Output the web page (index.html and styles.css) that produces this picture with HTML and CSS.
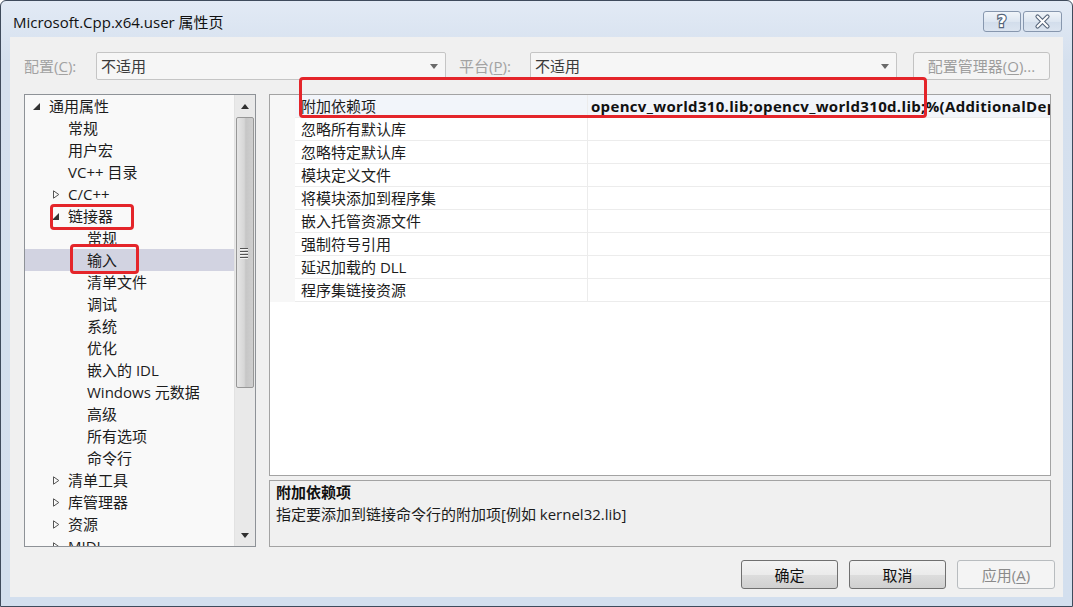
FILE: index.html
```html
<!DOCTYPE html>
<html lang="zh-CN">
<head>
<meta charset="utf-8">
<title>Microsoft.Cpp.x64.user 属性页</title>
<link rel="stylesheet" href="styles.css">
</head>
<body>
<div class="window">
  <div class="titlebar">
    <div class="title">Microsoft.Cpp.x64.user 属性页</div>
    <div class="tb-buttons">
      <div class="tb-btn help">
        <svg width="38" height="21" viewBox="0 0 38 21"><text x="19" y="16" text-anchor="middle" class="q">?</text></svg>
      </div>
      <div class="tb-btn close">
        <svg width="39" height="21" viewBox="0 0 39 21">
          <path d="M14.5 5.5 L24.5 15.5 M24.5 5.5 L14.5 15.5" stroke="#56657a" stroke-width="4.2" stroke-linecap="round"/>
          <path d="M14.5 5.5 L24.5 15.5 M24.5 5.5 L14.5 15.5" stroke="#ffffff" stroke-width="2" stroke-linecap="round"/>
        </svg>
      </div>
    </div>
  </div>

  <div class="client">
    <div class="config-row">
      <span class="label lbl-config">配置(<u>C</u>):</span>
      <div class="combo combo-config">
        <span>不适用</span>
        <svg class="arrow" width="8" height="5" viewBox="0 0 8 5"><path d="M0 0 H8 L4 5 Z" fill="#6a6a6a"/></svg>
      </div>
      <span class="label lbl-platform">平台(<u>P</u>):</span>
      <div class="combo combo-platform">
        <span>不适用</span>
        <svg class="arrow" width="8" height="5" viewBox="0 0 8 5"><path d="M0 0 H8 L4 5 Z" fill="#6a6a6a"/></svg>
      </div>
      <div class="btn-cfgmgr">配置管理器(<u>O</u>)...</div>
    </div>

    <div class="main">
      <div class="tree">
        <div class="tree-list">
          <div class="node l0"><span class="exp"><svg width="7" height="7" viewBox="0 0 7 7"><path d="M7 0 V7 H0 Z" fill="#333"/></svg></span>通用属性</div>
          <div class="node l1"><span class="exp"></span>常规</div>
          <div class="node l1"><span class="exp"></span>用户宏</div>
          <div class="node l1"><span class="exp"></span>VC++ 目录</div>
          <div class="node l1"><span class="exp"><svg width="8" height="9" viewBox="0 0 8 9"><path d="M1.5 0.8 L6.8 4.5 L1.5 8.2 Z" fill="none" stroke="#555" stroke-width="1"/></svg></span>C/C++</div>
          <div class="node l1"><span class="exp"><svg width="7" height="7" viewBox="0 0 7 7"><path d="M7 0 V7 H0 Z" fill="#333"/></svg></span>链接器</div>
          <div class="node l2"><span class="exp"></span>常规</div>
          <div class="node l2 selected"><span class="exp"></span>输入</div>
          <div class="node l2"><span class="exp"></span>清单文件</div>
          <div class="node l2"><span class="exp"></span>调试</div>
          <div class="node l2"><span class="exp"></span>系统</div>
          <div class="node l2"><span class="exp"></span>优化</div>
          <div class="node l2"><span class="exp"></span>嵌入的 IDL</div>
          <div class="node l2"><span class="exp"></span>Windows 元数据</div>
          <div class="node l2"><span class="exp"></span>高级</div>
          <div class="node l2"><span class="exp"></span>所有选项</div>
          <div class="node l2"><span class="exp"></span>命令行</div>
          <div class="node l1"><span class="exp"><svg width="8" height="9" viewBox="0 0 8 9"><path d="M1.5 0.8 L6.8 4.5 L1.5 8.2 Z" fill="none" stroke="#555" stroke-width="1"/></svg></span>清单工具</div>
          <div class="node l1"><span class="exp"><svg width="8" height="9" viewBox="0 0 8 9"><path d="M1.5 0.8 L6.8 4.5 L1.5 8.2 Z" fill="none" stroke="#555" stroke-width="1"/></svg></span>库管理器</div>
          <div class="node l1"><span class="exp"><svg width="8" height="9" viewBox="0 0 8 9"><path d="M1.5 0.8 L6.8 4.5 L1.5 8.2 Z" fill="none" stroke="#555" stroke-width="1"/></svg></span>资源</div>
          <div class="node l1 last"><span class="exp"><svg width="8" height="9" viewBox="0 0 8 9"><path d="M1.5 0.8 L6.8 4.5 L1.5 8.2 Z" fill="none" stroke="#555" stroke-width="1"/></svg></span>MIDL</div>
        </div>
        <div class="vscroll">
          <div class="sb-arrow"><svg width="8" height="5" viewBox="0 0 8 5"><path d="M0 5 H8 L4 0 Z" fill="#303030"/></svg></div>
          <div class="sb-track">
            <div class="sb-thumb">
              <div class="grip"><i></i><i></i><i></i><i></i></div>
            </div>
          </div>
          <div class="sb-arrow"><svg width="8" height="5" viewBox="0 0 8 5"><path d="M0 0 H8 L4 5 Z" fill="#303030"/></svg></div>
        </div>
      </div>

      <div class="right">
        <div class="grid">
          <div class="prow current"><div class="gutter"></div><div class="pname">附加依赖项</div><div class="pval">opencv_world310.lib;opencv_world310d.lib;%(AdditionalDependencies)</div></div>
          <div class="prow"><div class="gutter"></div><div class="pname">忽略所有默认库</div><div class="pval"></div></div>
          <div class="prow"><div class="gutter"></div><div class="pname">忽略特定默认库</div><div class="pval"></div></div>
          <div class="prow"><div class="gutter"></div><div class="pname">模块定义文件</div><div class="pval"></div></div>
          <div class="prow"><div class="gutter"></div><div class="pname">将模块添加到程序集</div><div class="pval"></div></div>
          <div class="prow"><div class="gutter"></div><div class="pname">嵌入托管资源文件</div><div class="pval"></div></div>
          <div class="prow"><div class="gutter"></div><div class="pname">强制符号引用</div><div class="pval"></div></div>
          <div class="prow"><div class="gutter"></div><div class="pname">延迟加载的 DLL</div><div class="pval"></div></div>
          <div class="prow"><div class="gutter"></div><div class="pname">程序集链接资源</div><div class="pval"></div></div>
        </div>
        <div class="desc">
          <div class="desc-title">附加依赖项</div>
          <div class="desc-text">指定要添加到链接命令行的附加项[例如 kernel32.lib]</div>
        </div>
      </div>
    </div>

    <div class="buttons">
      <div class="btn">确定</div>
      <div class="btn">取消</div>
      <div class="btn disabled">应用(<u>A</u>)</div>
    </div>
  </div>

  <div class="mark mark-linker"></div>
  <div class="mark mark-input"></div>
  <div class="mark mark-deps"></div>
</div>
</body>
</html>
```

FILE: styles.css
```css
* { box-sizing: border-box; }
html, body { margin: 0; padding: 0; background: #ffffff; }
body {
  font-family: "Open Sans", "Noto Sans CJK SC", sans-serif;
  font-size: 15px;
  color: #1a1a1a;
}
u { text-decoration: underline; text-underline-offset: 2px; }

.window {
  position: relative;
  width: 1073px;
  height: 607px;
  border: 1px solid #3f4b5c;
  border-radius: 6px 6px 0 0;
  background: linear-gradient(#e2eaf5, #d5e0ee 60px, #d3dfee);
  padding: 0 9px 9px 9px;
  display: flex;
  flex-direction: column;
  overflow: hidden;
}

/* title bar */
.titlebar {
  height: 36px;
  display: flex;
  justify-content: space-between;
  align-items: flex-start;
  flex: none;
}
.title {
  margin-top: 12px;
  padding-left: 3px;
  font-size: 15px;
  line-height: 19px;
  color: #111;
}
.tb-buttons {
  display: flex;
  gap: 2px;
  margin-top: 10px;
  margin-right: 1px;
}
.tb-btn {
  height: 21px;
  border: 1px solid #8797ae;
  border-radius: 3px;
  background: linear-gradient(#f0f4f9, #dde6f1 50%, #d2ddeb 51%, #dbe4f0);
  display: flex;
  align-items: center;
  justify-content: center;
  overflow: hidden;
}
.tb-btn svg { display: block; margin: -1px; }
.help { width: 38px; }
.close { width: 39px; }
.q {
  font-family: "DejaVu Sans", sans-serif;
  font-weight: bold;
  font-size: 16px;
  fill: #ffffff;
  stroke: #56657a;
  stroke-width: 2.4px;
  paint-order: stroke;
}

/* client area */
.client {
  flex: 1;
  background: #f0f0f0;
  padding: 15px 8px 8px 14px;
  display: flex;
  flex-direction: column;
}

.config-row {
  height: 28px;
  display: flex;
  align-items: center;
  margin-right: 5px;
  flex: none;
}
.label {
  color: #a2a2a2;
  line-height: 20px;
  flex: none;
}
.lbl-config { width: 72px; }
.lbl-platform { width: 71px; margin-left: 13px; }
.combo {
  height: 28px;
  border: 1px solid #c5c5c5;
  border-radius: 2px;
  background: #f6f6f6;
  display: flex;
  align-items: center;
  justify-content: space-between;
  padding: 0 7px 0 4px;
  color: #3a3a3a;
  line-height: 20px;
  flex: none;
}
.combo-config { width: 350px; }
.combo-platform { width: 367px; }
.arrow { display: block; margin-top: 1px; }
.btn-cfgmgr {
  margin-left: auto;
  width: 137px;
  height: 28px;
  border: 1px solid #c2c2c2;
  border-radius: 3px;
  background: #f4f4f4;
  color: #9d9d9d;
  display: flex;
  align-items: center;
  justify-content: center;
  line-height: 20px;
  flex: none;
}

/* main area */
.main {
  margin-top: 14px;
  height: 453px;
  display: flex;
  gap: 13px;
  margin-right: 4px;
  flex: none;
}

.tree {
  width: 232px;
  height: 453px;
  flex: none;
  border: 1px solid #8e9297;
  background: #f9f9f9;
  display: flex;
  overflow: hidden;
}
.tree-list {
  flex: 1;
  min-width: 0;
  overflow: hidden;
}
.node {
  height: 22px;
  line-height: 22px;
  display: flex;
  align-items: center;
  white-space: nowrap;
  color: #1c1c1c;
}
.node.l0 { padding-left: 8px; }
.node.l1 { padding-left: 27px; }
.node.l2 { padding-left: 46px; }
.node.selected { background: #d2d3e1; }
.node.last { align-items: flex-start; line-height: 22px; }
.exp {
  width: 16px;
  height: 22px;
  display: flex;
  align-items: center;
  flex: none;
}
.exp svg { display: block; margin-top: 1px; }

.vscroll {
  width: 21px;
  flex: none;
  display: flex;
  flex-direction: column;
  background: #e9e9e9;
  border-left: 1px solid #e2e2e2;
}
.sb-arrow {
  height: 22px;
  flex: none;
  display: flex;
  align-items: center;
  justify-content: center;
}
.sb-arrow svg { display: block; }
.sb-track {
  flex: 1;
  display: flex;
  flex-direction: column;
  padding: 0 1px;
}
.sb-thumb {
  height: 271px;
  border: 1px solid #979797;
  border-radius: 2px;
  background: linear-gradient(90deg, #e6e6e6, #d6d6d6 45%, #c6c6c6 55%, #cfcfcf);
  display: flex;
  align-items: center;
  justify-content: center;
}
.grip {
  display: flex;
  flex-direction: column;
  gap: 2px;
  margin-right: 2px;
}
.grip i {
  display: block;
  width: 8px;
  height: 1px;
  background: #555;
  box-shadow: 0 1px 0 #f4f4f4;
}

.right {
  flex: 1;
  min-width: 0;
  display: flex;
  flex-direction: column;
  gap: 4px;
}
.grid {
  height: 382px;
  border: 1px solid #a3a3a3;
  background: #ffffff;
  overflow: hidden;
}
.prow {
  height: 23px;
  display: flex;
  white-space: nowrap;
}
.gutter {
  width: 25px;
  flex: none;
  background: #f7f7f7;
}
.pname {
  width: 293px;
  flex: none;
  padding-left: 6px;
  line-height: 22px;
  border-bottom: 1px solid #ececec;
  border-right: 1px solid #ececec;
  color: #1c1c1c;
}
.pval {
  flex: 1;
  overflow: hidden;
  padding-left: 3px;
  line-height: 22px;
  border-bottom: 1px solid #ececec;
  font-weight: bold;
  letter-spacing: 0.33px;
  color: #111;
  min-width: 0;
}
.prow.current .pname,
.prow.current .pval { background: #f2f5fa; }

.desc {
  height: 67px;
  border: 1px solid #a3a3a3;
  background: #f0f0f0;
  padding-left: 6px;
}
.desc-title {
  font-weight: bold;
  line-height: 22px;
  color: #111;
}
.desc-text {
  line-height: 22px;
  color: #1c1c1c;
}

/* bottom buttons */
.buttons {
  margin-top: 13px;
  height: 29px;
  display: flex;
  justify-content: flex-end;
  gap: 11px;
  flex: none;
}
.btn {
  width: 97px;
  height: 29px;
  border: 1px solid #707070;
  border-radius: 3px;
  background: linear-gradient(#f3f3f3, #ebebeb 50%, #dddddd 51%, #d0d0d0);
  display: flex;
  align-items: center;
  justify-content: center;
  line-height: 20px;
  color: #111;
}
.btn.disabled {
  width: 98px;
  border-color: #b8bcbf;
  background: #f4f4f4;
  color: #8a8a8a;
}

/* red annotation marks drawn over the screenshot */
.mark {
  position: absolute;
  border: 3px solid #e4252a;
  border-radius: 4px;
  pointer-events: none;
}
.mark-linker { left: 49px; top: 203px; width: 84px; height: 26px; }
.mark-input { left: 69px; top: 243px; width: 69px; height: 30px; }
.mark-deps { left: 298px; top: 76px; width: 628px; height: 41px; }
```
